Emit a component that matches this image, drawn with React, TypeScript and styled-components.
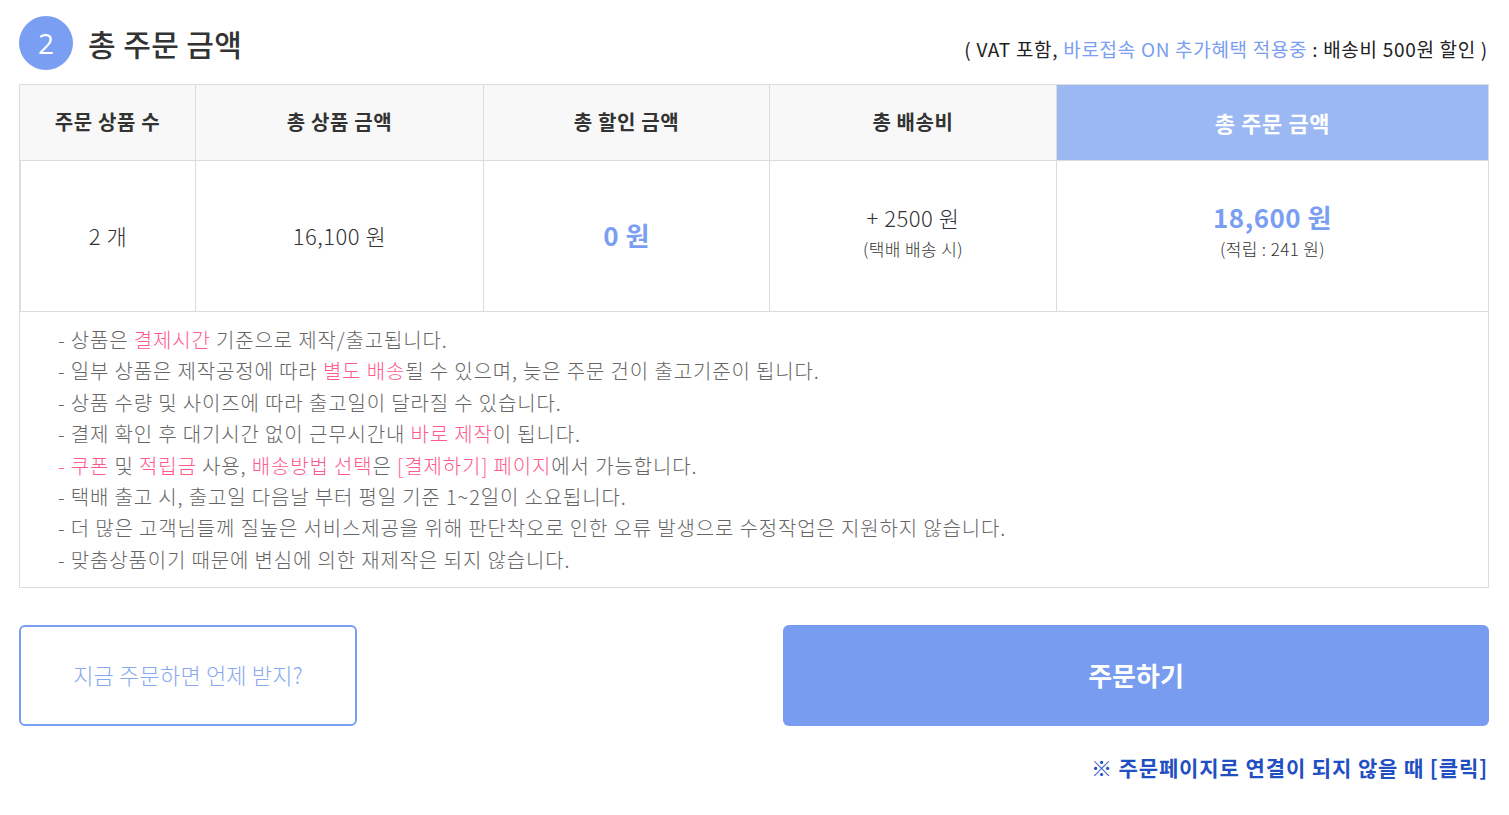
import React from "react";
import styled, { createGlobalStyle } from "styled-components";

const Global = createGlobalStyle`
  html, body { margin: 0; padding: 0; background: #fff; }
  body {
    font-family: "Noto Sans CJK KR", "Noto Sans", "Open Sans", sans-serif;
    color: #333;
  }
  * { box-sizing: border-box; }
`;

const Page = styled.div`
  width: 1509px;
  padding: 16px 20px 0 19px;
`;

const Header = styled.div`
  display: flex;
  align-items: center;
  justify-content: space-between;
  height: 54px;
  margin-bottom: 14px;
`;

const TitleWrap = styled.div`
  display: flex;
  align-items: center;
  gap: 15px;
`;

const StepCircle = styled.div`
  width: 54px;
  height: 54px;
  border-radius: 50%;
  background: #7a9ef2;
  color: #fff;
  font-size: 28px;
  display: flex;
  align-items: center;
  justify-content: center;
  font-family: "Open Sans", "Noto Sans", sans-serif;
`;

const Title = styled.h2`
  margin: 0;
  font-size: 30px;
  font-weight: 500;
  color: #333;
  letter-spacing: 0.4px;
`;

const Notice = styled.div`
  font-size: 19px;
  letter-spacing: 0.7px;
  color: #222;
  margin-top: 10px;
  margin-right: 1px;
`;

const Blue = styled.span`
  color: #7a9ef2;
`;

const Table = styled.div`
  border: 1px solid #dcdcdc;
`;

const Grid = styled.div`
  display: grid;
  grid-template-columns: 175px 288px 286px 287px 1fr;
`;

const HeadCell = styled.div<{ $accent?: boolean }>`
  height: 76px;
  display: flex;
  align-items: center;
  justify-content: center;
  background: ${(p) => (p.$accent ? "#9bb8f2" : "#f8f8f8")};
  color: ${(p) => (p.$accent ? "#fff" : "#333")};
  font-size: ${(p) => (p.$accent ? "22px" : "20px")};
  font-weight: 700;
  letter-spacing: 0.6px;
  padding-bottom: 2px;
  border-left: 1px solid #dcdcdc;
  border-bottom: 1px solid #dcdcdc;
  &:first-child { border-left: none; }
`;

const BodyCell = styled.div`
  height: 151px;
  display: flex;
  flex-direction: column;
  align-items: center;
  justify-content: center;
  border-left: 1px solid #dcdcdc;
  border-bottom: 1px solid #dcdcdc;
  &:first-child { border-left: none; }
`;

const Value = styled.div<{ $strong?: boolean }>`
  font-size: ${(p) => (p.$strong ? "26px" : "22px")};
  font-weight: ${(p) => (p.$strong ? 600 : 300)};
  color: ${(p) => (p.$strong ? "#7a9ef2" : "#333")};
  letter-spacing: 0.5px;
  line-height: 24px;
  padding-bottom: 2px;
`;

const SubValue = styled.div`
  font-size: 17px;
  font-weight: 300;
  color: #333;
  letter-spacing: 0.4px;
  line-height: 36px;
`;

const Notes = styled.ul`
  list-style: none;
  margin: 0;
  padding: 12px 38px 12px 38px;
`;

const Note = styled.li`
  font-size: 20px;
  font-weight: 300;
  color: #666;
  letter-spacing: 0.85px;
  line-height: 31.4px;
  white-space: nowrap;
`;

const Pink = styled.span`
  color: #ff5a8c;
`;

const Actions = styled.div`
  display: flex;
  justify-content: space-between;
  margin-top: 37px;
`;

const GhostButton = styled.button`
  width: 338px;
  height: 101px;
  border: 2px solid #7a9ef2;
  border-radius: 6px;
  background: #fff;
  color: #8aa8f0;
  font-family: inherit;
  font-size: 22px;
  font-weight: 300;
  letter-spacing: 0.2px;
  padding-bottom: 4px;
  cursor: pointer;
`;

const PrimaryButton = styled.button`
  width: 706px;
  height: 101px;
  border: none;
  border-radius: 6px;
  background: #789cf0;
  color: #fff;
  font-family: inherit;
  font-size: 26px;
  font-weight: 700;
  padding-bottom: 4px;
  cursor: pointer;
`;

const HelpLink = styled.a`
  display: block;
  text-align: right;
  margin-top: 26px;
  margin-right: 1px;
  font-size: 21px;
  font-weight: 700;
  letter-spacing: 0.9px;
  color: #1f4fc3;
  text-decoration: none;
`;

export default function App() {
  return (
    <Page>
      <Global />
      <Header>
        <TitleWrap>
          <StepCircle>2</StepCircle>
          <Title>총 주문 금액</Title>
        </TitleWrap>
        <Notice>
          ( VAT 포함, <Blue>바로접속 ON 추가혜택 적용중</Blue> : 배송비 500원 할인 )
        </Notice>
      </Header>
      <Table>
        <Grid>
          <HeadCell>주문 상품 수</HeadCell>
          <HeadCell>총 상품 금액</HeadCell>
          <HeadCell>총 할인 금액</HeadCell>
          <HeadCell>총 배송비</HeadCell>
          <HeadCell $accent>총 주문 금액</HeadCell>
          <BodyCell>
            <Value>2 개</Value>
          </BodyCell>
          <BodyCell>
            <Value>16,100 원</Value>
          </BodyCell>
          <BodyCell>
            <Value $strong>0 원</Value>
          </BodyCell>
          <BodyCell>
            <Value>+ 2500 원</Value>
            <SubValue>(택배 배송 시)</SubValue>
          </BodyCell>
          <BodyCell>
            <Value $strong>18,600 원</Value>
            <SubValue>(적립 : 241 원)</SubValue>
          </BodyCell>
        </Grid>
        <Notes>
          <Note>- 상품은 <Pink>결제시간</Pink> 기준으로 제작/출고됩니다.</Note>
          <Note>- 일부 상품은 제작공정에 따라 <Pink>별도 배송</Pink>될 수 있으며, 늦은 주문 건이 출고기준이 됩니다.</Note>
          <Note>- 상품 수량 및 사이즈에 따라 출고일이 달라질 수 있습니다.</Note>
          <Note>- 결제 확인 후 대기시간 없이 근무시간내 <Pink>바로 제작</Pink>이 됩니다.</Note>
          <Note>
            <Pink>- 쿠폰</Pink> 및 <Pink>적립금</Pink> 사용, <Pink>배송방법 선택</Pink>은 <Pink>[결제하기] 페이지</Pink>에서 가능합니다.
          </Note>
          <Note>- 택배 출고 시, 출고일 다음날 부터 평일 기준 1~2일이 소요됩니다.</Note>
          <Note>- 더 많은 고객님들께 질높은 서비스제공을 위해 판단착오로 인한 오류 발생으로 수정작업은 지원하지 않습니다.</Note>
          <Note>- 맞춤상품이기 때문에 변심에 의한 재제작은 되지 않습니다.</Note>
        </Notes>
      </Table>
      <Actions>
        <GhostButton>지금 주문하면 언제 받지?</GhostButton>
        <PrimaryButton>주문하기</PrimaryButton>
      </Actions>
      <HelpLink href="#">※ 주문페이지로 연결이 되지 않을 때 [클릭]</HelpLink>
    </Page>
  );
}
